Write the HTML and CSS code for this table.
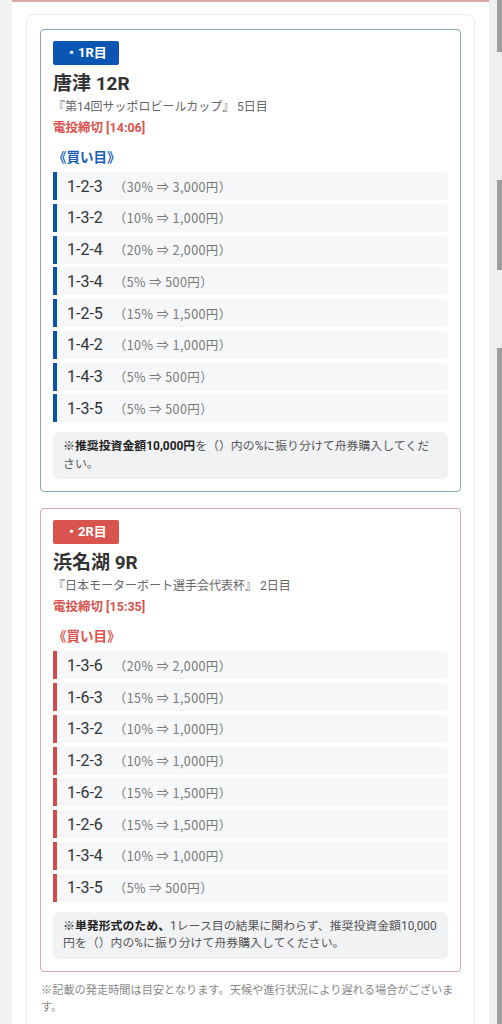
FILE: index.html
```html
<!DOCTYPE html>
<html lang="ja">
<head>
<meta charset="utf-8">
<title>買い目</title>
<link rel="stylesheet" href="styles.css">
</head>
<body>
<div class="page">
  <main class="container">
    <div class="panel">
      <section class="race race--blue">
        <span class="badge">・1R目</span>
        <h2 class="race-title">唐津 12R</h2>
        <p class="race-sub">『第14回サッポロビールカップ』 5日目</p>
        <p class="deadline">電投締切 [14:06]</p>
        <h3 class="buy-head">《買い目》</h3>
        <ul class="bets">
          <li class="bet"><span class="combo">1-2-3</span><span class="detail">（30% ⇒ 3,000円）</span></li>
          <li class="bet"><span class="combo">1-3-2</span><span class="detail">（10% ⇒ 1,000円）</span></li>
          <li class="bet"><span class="combo">1-2-4</span><span class="detail">（20% ⇒ 2,000円）</span></li>
          <li class="bet"><span class="combo">1-3-4</span><span class="detail">（5% ⇒ 500円）</span></li>
          <li class="bet"><span class="combo">1-2-5</span><span class="detail">（15% ⇒ 1,500円）</span></li>
          <li class="bet"><span class="combo">1-4-2</span><span class="detail">（10% ⇒ 1,000円）</span></li>
          <li class="bet"><span class="combo">1-4-3</span><span class="detail">（5% ⇒ 500円）</span></li>
          <li class="bet"><span class="combo">1-3-5</span><span class="detail">（5% ⇒ 500円）</span></li>
        </ul>
        <p class="note"><strong>※推奨投資金額10,000円</strong>を（）内の%に振り分けて舟券購入してください。</p>
      </section>

      <section class="race race--red">
        <span class="badge">・2R目</span>
        <h2 class="race-title">浜名湖 9R</h2>
        <p class="race-sub">『日本モーターボート選手会代表杯』 2日目</p>
        <p class="deadline">電投締切 [15:35]</p>
        <h3 class="buy-head">《買い目》</h3>
        <ul class="bets">
          <li class="bet"><span class="combo">1-3-6</span><span class="detail">（20% ⇒ 2,000円）</span></li>
          <li class="bet"><span class="combo">1-6-3</span><span class="detail">（15% ⇒ 1,500円）</span></li>
          <li class="bet"><span class="combo">1-3-2</span><span class="detail">（10% ⇒ 1,000円）</span></li>
          <li class="bet"><span class="combo">1-2-3</span><span class="detail">（10% ⇒ 1,000円）</span></li>
          <li class="bet"><span class="combo">1-6-2</span><span class="detail">（15% ⇒ 1,500円）</span></li>
          <li class="bet"><span class="combo">1-2-6</span><span class="detail">（15% ⇒ 1,500円）</span></li>
          <li class="bet"><span class="combo">1-3-4</span><span class="detail">（10% ⇒ 1,000円）</span></li>
          <li class="bet"><span class="combo">1-3-5</span><span class="detail">（5% ⇒ 500円）</span></li>
        </ul>
        <p class="note"><strong>※単発形式のため、</strong>1レース目の結果に関わらず、推奨投資金額10,000<wbr>円を（）内の%に振り分けて舟券購入してください。</p>
      </section>

      <p class="footnote">※記載の発走時間は目安となります。天候や進行状況により遅れる場合がございます。</p>
    </div>
  </main>
  <div class="scrollbar">
    <span class="thumb thumb--a"></span>
    <span class="thumb thumb--b"></span>
    <span class="thumb thumb--c"></span>
  </div>
</div>
</body>
</html>
```

FILE: styles.css
```css
* { box-sizing: border-box; }

html, body {
  margin: 0;
  padding: 0;
}

body {
  font-family: Roboto, "Noto Sans CJK JP", "Noto Sans", sans-serif;
  color: #333;
  background: #f1f1f1;
}

.page {
  display: flex;
  height: 1024px;
  overflow: hidden;
  padding-left: 12px;
}

.container {
  width: 477px;
  flex: none;
  background: #fff;
  border-top: 2px solid #dca6a6;
  padding: 12px 14px 0 14px;
}

.panel {
  border: 1px solid #ececec;
  border-radius: 8px;
  padding: 14px 13px 20px;
  background: #fff;
}

.race {
  border: 1px solid #86a6ba;
  border-radius: 4px;
  padding: 11px 12px 12px;
  margin-bottom: 16px;
}

.race--red {
  border-color: #e2a9a9;
  margin-bottom: 10px;
}

.badge {
  display: inline-block;
  height: 24px;
  line-height: 24px;
  padding: 0 12px;
  border-radius: 2px;
  background: #0a56b2;
  color: #fff;
  font-size: 13px;
  font-weight: 700;
}

.race--red .badge {
  background: #d9534f;
}

.race-title {
  margin: 6px 0 0;
  font-size: 19px;
  line-height: 26px;
  font-weight: 700;
  color: #333;
}

.race-sub {
  margin: 0;
  font-size: 12px;
  line-height: 20px;
  color: #666;
}

.deadline {
  margin: 0;
  font-size: 12.5px;
  line-height: 22px;
  font-weight: 700;
  color: #d9534f;
}

.buy-head {
  margin: 7px 0 0;
  font-size: 13.5px;
  line-height: 22px;
  font-weight: 700;
  color: #1a5fb4;
}

.race--red .buy-head {
  color: #d9534f;
}

.bets {
  list-style: none;
  margin: 4px 0 0;
  padding: 0;
  display: flex;
  flex-direction: column;
  gap: 3.75px;
}

.bet {
  display: flex;
  align-items: center;
  height: 28px;
  padding-left: 10px;
  border-left: 4px solid #0a53a8;
  background: #f6f7f9;
  border-radius: 0 3px 3px 0;
}

.race--red .bet {
  border-left-color: #d24b4b;
}

.combo {
  font-size: 16px;
  color: #333;
}

.detail {
  font-family: "Noto Sans CJK JP", sans-serif;
  font-size: 12.5px;
  letter-spacing: 0.4px;
  color: #777;
  margin-left: 11px;
}

.note {
  margin: 10px 0 0;
  padding: 6px 9.5px 6px 10px;
  background: #f1f2f4;
  border-radius: 6px;
  font-size: 11.9px;
  line-height: 17.5px;
  color: #555;
}

.note strong {
  color: #222;
  font-weight: 700;
}

.footnote {
  margin: 0;
  padding-left: 1px;
  font-size: 11.2px;
  line-height: 17px;
  color: #888;
}

.scrollbar {
  width: 13px;
  flex: none;
  background: #efefef;
  display: flex;
  flex-direction: column;
  align-items: flex-end;
}

.thumb {
  display: block;
  width: 5px;
  background: #9e9e9e;
}

.thumb--a {
  height: 52px;
}

.thumb--b {
  margin-top: 128px;
  height: 90px;
}

.thumb--c {
  margin-top: 78px;
  flex: 1;
}
```
